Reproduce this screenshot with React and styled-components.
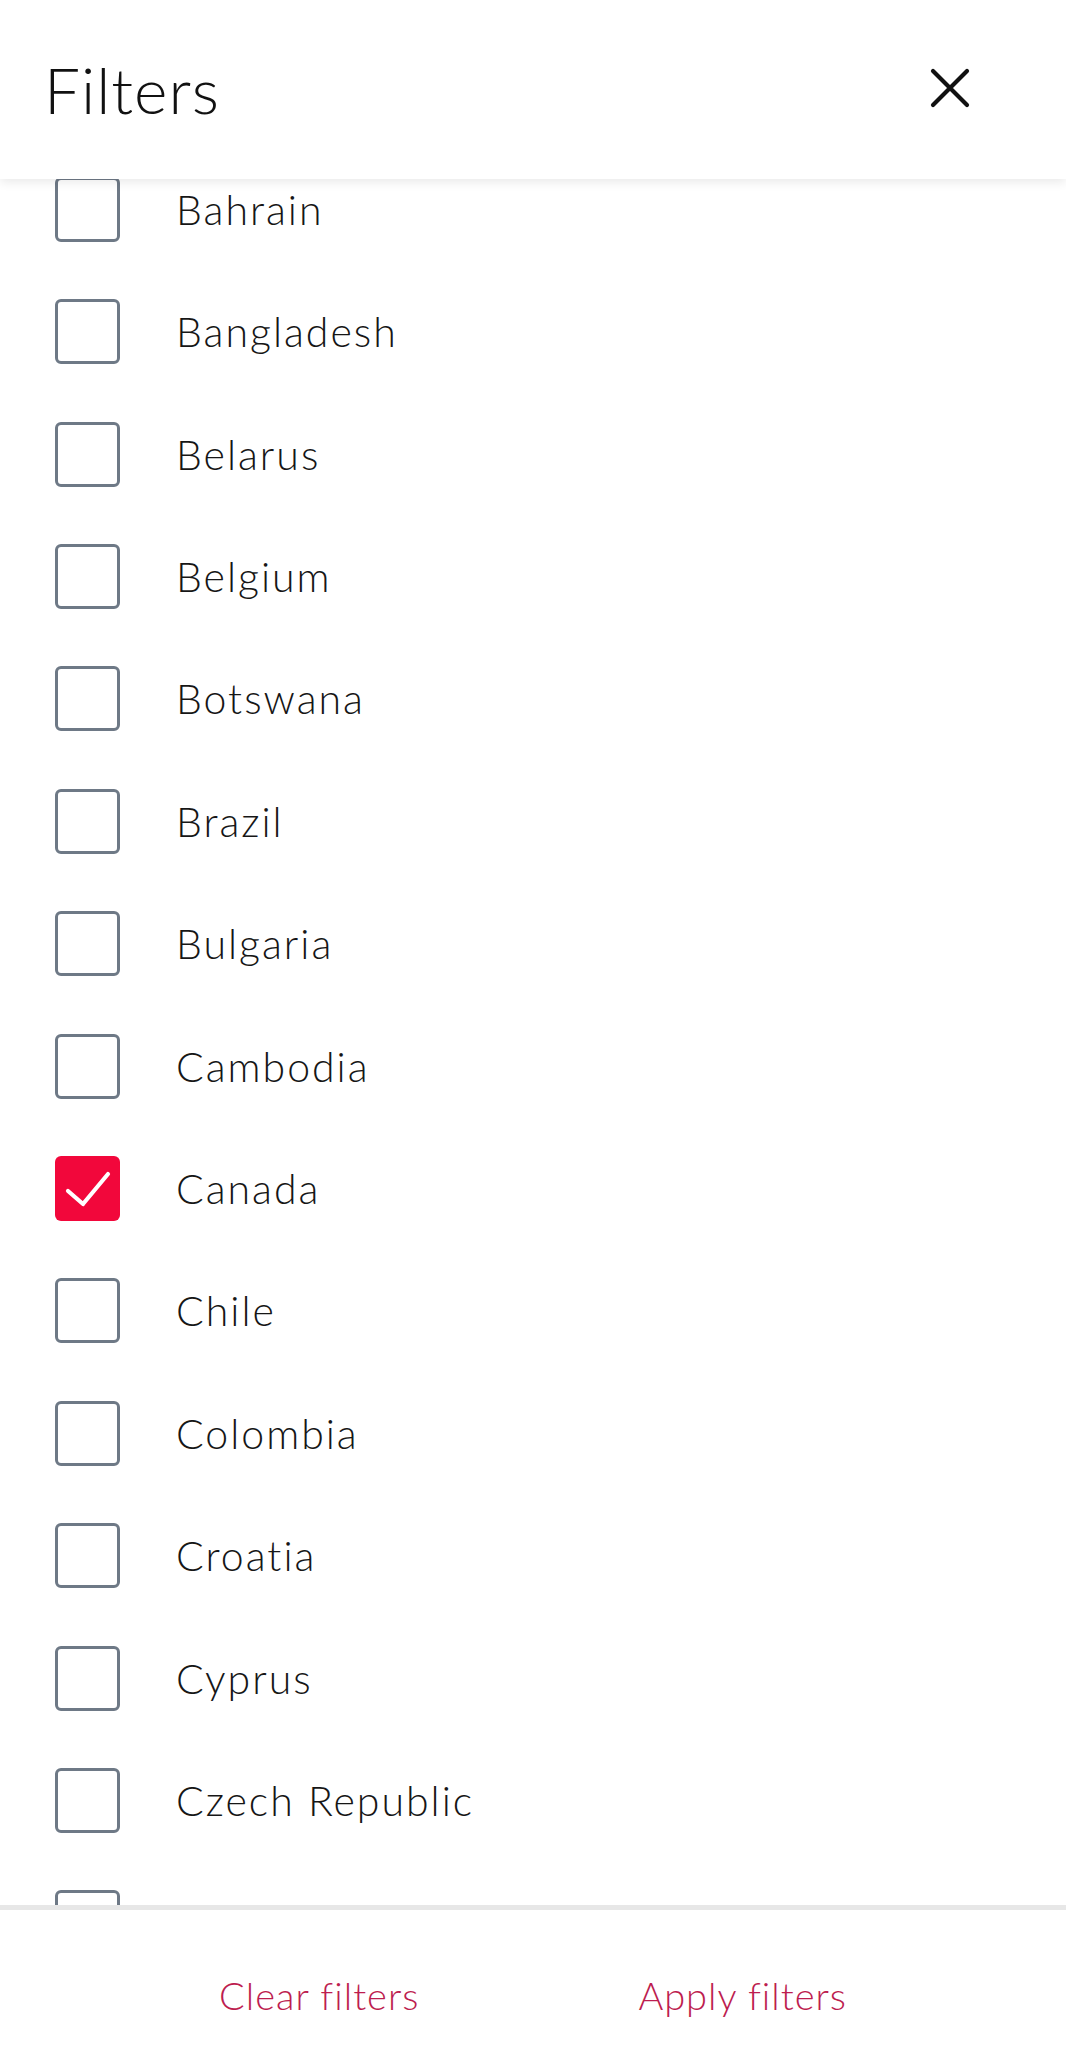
import React, { useLayoutEffect, useRef, useState } from 'react'
import styled, { createGlobalStyle } from 'styled-components'

const GlobalStyle = createGlobalStyle`
  html, body {
    margin: 0;
    padding: 0;
    background: #ffffff;
    font-family: Lato, "Noto Sans", Arial, sans-serif;
  }
`

const countries = [
  'Argentina', 'Australia', 'Austria', 'Bahrain', 'Bangladesh', 'Belarus', 'Belgium',
  'Botswana', 'Brazil', 'Bulgaria', 'Cambodia', 'Canada', 'Chile', 'Colombia',
  'Croatia', 'Cyprus', 'Czech Republic', 'Denmark', 'Ecuador', 'Egypt', 'Estonia'
]

const ROW = 122.4

const Page = styled.div`
  display: flex;
  flex-direction: column;
  height: 2048px;
  width: 1066px;
  overflow: hidden;
  background: #fff;
`

const Header = styled.header`
  position: relative;
  z-index: 2;
  flex: 0 0 179px;
  display: flex;
  align-items: center;
  justify-content: space-between;
  padding: 0 94px 0 44px;
  background: #fff;
  box-shadow: 0 3px 10px rgba(0, 0, 0, 0.09);
`

const Title = styled.h1`
  margin: 0;
  font-size: 64px;
  font-weight: 300;
  color: #111;
  letter-spacing: 1px;
`

const CloseButton = styled.button`
  border: 0;
  background: none;
  padding: 0;
  width: 44px;
  height: 44px;
  display: flex;
  align-items: center;
  justify-content: center;
  margin-top: -4px;
`

const List = styled.div`
  flex: 1;
  overflow-y: auto;
  scrollbar-width: none;
  &::-webkit-scrollbar { display: none; }
`

const Row = styled.label`
  display: flex;
  align-items: center;
  height: ${ROW}px;
  padding-left: 55px;
  gap: 56px;
`

const Box = styled.span`
  flex: 0 0 auto;
  box-sizing: border-box;
  width: 65px;
  height: 65px;
  border-radius: 6px;
  border: ${p => (p.checked ? '0' : '3px solid #6e7986')};
  background: ${p => (p.checked ? '#f2073b' : '#fff')};
  display: flex;
  align-items: center;
  justify-content: center;
`

const Name = styled.span`
  font-size: 41px;
  font-weight: 300;
  color: #161616;
  letter-spacing: 2px;
`

const Footer = styled.footer`
  flex: 0 0 auto;
  height: 143px;
  box-sizing: border-box;
  border-top: 5px solid #e7e7e7;
  display: flex;
  justify-content: space-evenly;
  align-items: flex-start;
  padding-top: 63px;
`

const FooterButton = styled.button`
  border: 0;
  background: none;
  padding: 0;
  font-family: inherit;
  font-size: 38px;
  font-weight: 300;
  color: #bd1d4f;
  letter-spacing: 1px;
  line-height: 44px;
`

const CloseIcon = () => (
  <svg width="40" height="40" viewBox="0 0 40 40">
    <path d="M3 3 L37 37 M37 3 L3 37" stroke="#111" strokeWidth="4.2" strokeLinecap="round" />
  </svg>
)

const Check = () => (
  <svg width="65" height="65" viewBox="0 0 65 65">
    <path d="M13 35 L28 48 L53 18" stroke="#fff" strokeWidth="4.2" fill="none" strokeLinecap="round" strokeLinejoin="round" />
  </svg>
)

export default function App() {
  const [selected] = useState(['Canada'])
  const listRef = useRef(null)

  useLayoutEffect(() => {
    // list arrives already scrolled down to Bahrain
    if (listRef.current) listRef.current.scrollTop = 3 * ROW + 31
  }, [])

  return (
    <Page>
      <GlobalStyle />
      <Header>
        <Title>Filters</Title>
        <CloseButton aria-label="Close"><CloseIcon /></CloseButton>
      </Header>
      <List ref={listRef}>
        {countries.map(c => {
          const on = selected.includes(c)
          return (
            <Row key={c}>
              <Box checked={on}>{on && <Check />}</Box>
              <Name>{c}</Name>
            </Row>
          )
        })}
      </List>
      <Footer>
        <FooterButton>Clear filters</FooterButton>
        <FooterButton>Apply filters</FooterButton>
      </Footer>
    </Page>
  )
}
